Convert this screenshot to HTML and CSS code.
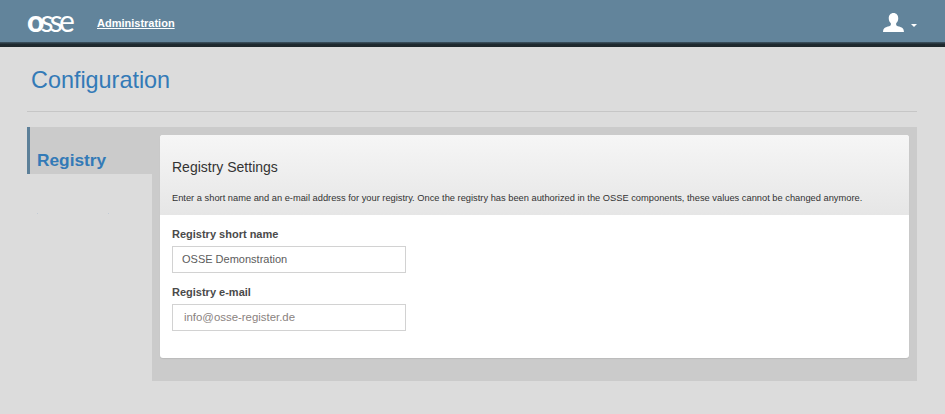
FILE: index.html
```html
<!DOCTYPE html>
<html lang="en">
<head>
<meta charset="utf-8">
<title>Configuration</title>
<link rel="stylesheet" href="styles.css">
</head>
<body>
<header class="navbar">
  <div class="nav-main">
    <span class="logo"><b>o</b>sse</span>
    <a class="nav-link" href="#">Administration</a>
    <div class="user">
      <svg class="user-icon" viewBox="0 0 22 20" width="21" height="19" aria-hidden="true">
        <path fill="#fff" d="M11 0c3 0 5 2.300 5 5.500 0 2.300-.9 4.200-2.200 5.300v1.500c0 .9 1 1.300 3 2 2.700.9 5.200 1.700 5.200 5.700H0c0-4 2.500-4.800 5.200-5.700 2-.7 3-1.100 3-2v-1.500C6.900 9.700 6 7.800 6 5.500 6 2.300 8 0 11 0z"/>
      </svg>
      <span class="caret"></span>
    </div>
  </div>
  <div class="nav-edge"></div>
</header>
<main class="page">
  <h1 class="page-title">Configuration</h1>
  <div class="layout">
    <aside class="sidebar">
      <div class="tab">Registry</div>
      <div class="specks"><i></i><i></i></div>
    </aside>
    <section class="content">
      <div class="panel">
        <div class="panel-head">
          <h2>Registry Settings</h2>
          <p>Enter a short name and an e-mail address for your registry. Once the registry has been authorized in the OSSE components, these values cannot be changed anymore.</p>
        </div>
        <form class="panel-body">
          <label class="field-label" for="short">Registry short name</label>
          <input class="field" id="short" type="text" value="OSSE Demonstration">
          <label class="field-label" for="mail">Registry e-mail</label>
          <input class="field field-mail" id="mail" type="text" placeholder="info@osse-register.de">
        </form>
      </div>
    </section>
  </div>
</main>
</body>
</html>
```
FILE: styles.css
```css
* { box-sizing: border-box; }
html, body { height: 100%; }
body {
  margin: 0;
  background: #dcdcdc;
  font-family: "Liberation Sans", Arial, sans-serif;
  color: #333;
  overflow: hidden;
}
.navbar { height: 47px; }
.nav-main {
  height: 42px;
  background: #62849b;
  display: flex;
  align-items: center;
  padding: 0 28px 0 27px;
}
.nav-edge {
  height: 5px;
  background: linear-gradient(#3f5563, #1e2a30 45%, #20282c);
}
.logo {
  width: 70px;
  color: #fff;
  font: 400 30px/1 "Lato", sans-serif;
  letter-spacing: -3.800px;
  margin-top: -2px;
}
.logo b { font-weight: 900; }
.nav-link {
  color: #fff;
  font-size: 11px;
  font-weight: 700;
  text-decoration: underline;
  margin-top: 4px;
}
.user {
  margin-left: auto;
  display: flex;
  align-items: center;
  margin-top: 2px;
}
.user-icon { display: block; }
.caret {
  width: 0;
  height: 0;
  margin: 6px 0 0 7px;
  border: 3px solid transparent;
  border-top-color: #fff;
  border-bottom: 0;
}
.page { padding: 0 28px 0 27px; }
.page-title {
  margin: 0;
  height: 65px;
  padding: 19px 0 0 4px;
  font-size: 23.400px;
  line-height: 28px;
  font-weight: 400;
  color: #337ab7;
  border-bottom: 1px solid #c6c6c6;
}
.layout {
  display: flex;
  margin-top: 15px;
  height: 254px;
}
.sidebar { width: 125px; flex: none; }
.tab {
  height: 47px;
  background: #cbcbcb;
  border-left: 3px solid #5d8099;
  padding: 23px 0 0 7px;
  color: #337ab7;
  font-size: 17.300px;
  line-height: 21px;
  font-weight: 700;
}
.specks {
  display: flex;
  gap: 70px;
  padding: 39px 0 0 10px;
}
.specks i {
  width: 1px;
  height: 1px;
  background: #c3ccd6;
}
.content {
  flex: 1;
  min-width: 0;
  background: #cbcbcb;
  padding: 8px;
}
.panel {
  height: 223px;
  background: #fff;
  border-radius: 3px;
  overflow: hidden;
  box-shadow: 0 1px 1px rgba(0, 0, 0, .08);
}
.panel-head {
  height: 80px;
  padding: 23px 12px 0;
  background: linear-gradient(#f6f6f6, #e6e6e6);
}
.panel-head h2 {
  margin: 0;
  font-size: 14px;
  line-height: 18px;
  font-weight: 400;
  color: #333;
}
.panel-head p {
  margin: 16px 0 0;
  font-size: 9.310px;
  line-height: 12px;
  color: #333;
  white-space: nowrap;
}
.panel-body {
  display: flex;
  flex-direction: column;
  align-items: flex-start;
  padding: 12px 12px 0;
}
.field-label {
  font-size: 11px;
  line-height: 14px;
  font-weight: 700;
  color: #4a4a4a;
}
.field {
  width: 234px;
  height: 26.500px;
  margin: 5px 0 12.500px;
  padding: 0 9px;
  border: 1px solid #d2d2d2;
  background: #fff;
  font-family: inherit;
  font-size: 11px;
  color: #5c5c5c;
  outline: 0;
}
.field-mail { padding-left: 11px; font-size: 11.400px; }
.field::placeholder { color: #8a8280; opacity: 1; }
```
